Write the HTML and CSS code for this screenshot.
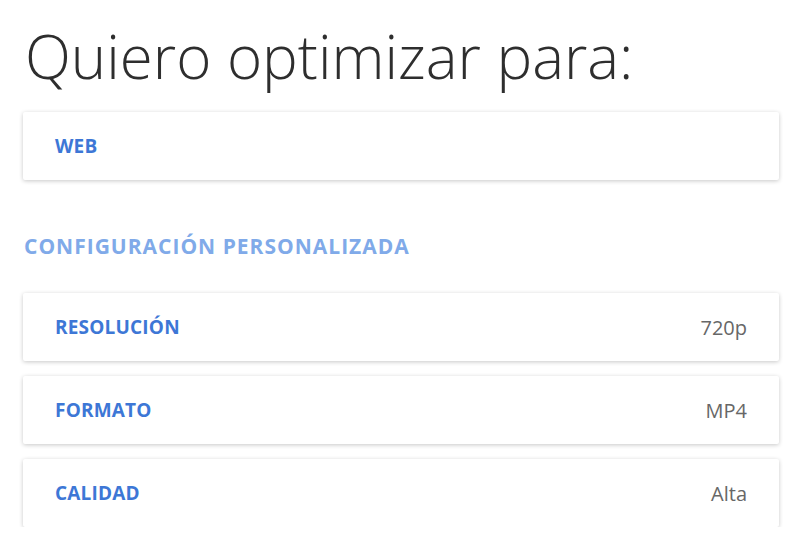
FILE: index.html
```html
<!DOCTYPE html>
<html lang="es">
<head>
<meta charset="utf-8">
<link rel="stylesheet" href="styles.css">
</head>
<body>
<main class="page">
  <h1 class="title">Quiero optimizar para:</h1>
  <div class="card"><span class="label">WEB</span></div>
  <h2 class="section">CONFIGURACIÓN PERSONALIZADA</h2>
  <div class="list">
    <div class="card"><span class="label">RESOLUCIÓN</span><span class="value">720p</span></div>
    <div class="card"><span class="label">FORMATO</span><span class="value">MP4</span></div>
    <div class="card"><span class="label">CALIDAD</span><span class="value">Alta</span></div>
  </div>
</main>
</body>
</html>
```

FILE: styles.css
```css
html, body {
  margin: 0;
  padding: 0;
  background: #ffffff;
}
body {
  font-family: "Open Sans", "Liberation Sans", sans-serif;
}
.page {
  padding: 14px 21px 0 23px;
  display: flex;
  flex-direction: column;
}
.title {
  margin: 0 0 0 2px;
  font-weight: 300;
  font-size: 60px;
  line-height: 84px;
  color: #2e2e2e;
  letter-spacing: 0;
}
.card {
  display: flex;
  align-items: center;
  justify-content: space-between;
  height: 68px;
  padding: 0 32px 0 32px;
  background: #fff;
  border-radius: 2px;
  box-shadow: 0 1px 4px rgba(0, 0, 0, 0.22);
}
.title + .card {
  margin-top: 14px;
}
.label {
  font-weight: 700;
  font-size: 19px;
  letter-spacing: 0.2px;
  color: #3d77d6;
}
.value {
  font-weight: 400;
  font-size: 20px;
  color: #676767;
}
.section {
  margin: 52px 0 0 1px;
  font-weight: 700;
  font-size: 21px;
  letter-spacing: 1px;
  line-height: 28px;
  color: #80aae9;
}
.list {
  margin-top: 33px;
  display: flex;
  flex-direction: column;
  gap: 15px;
}
```
